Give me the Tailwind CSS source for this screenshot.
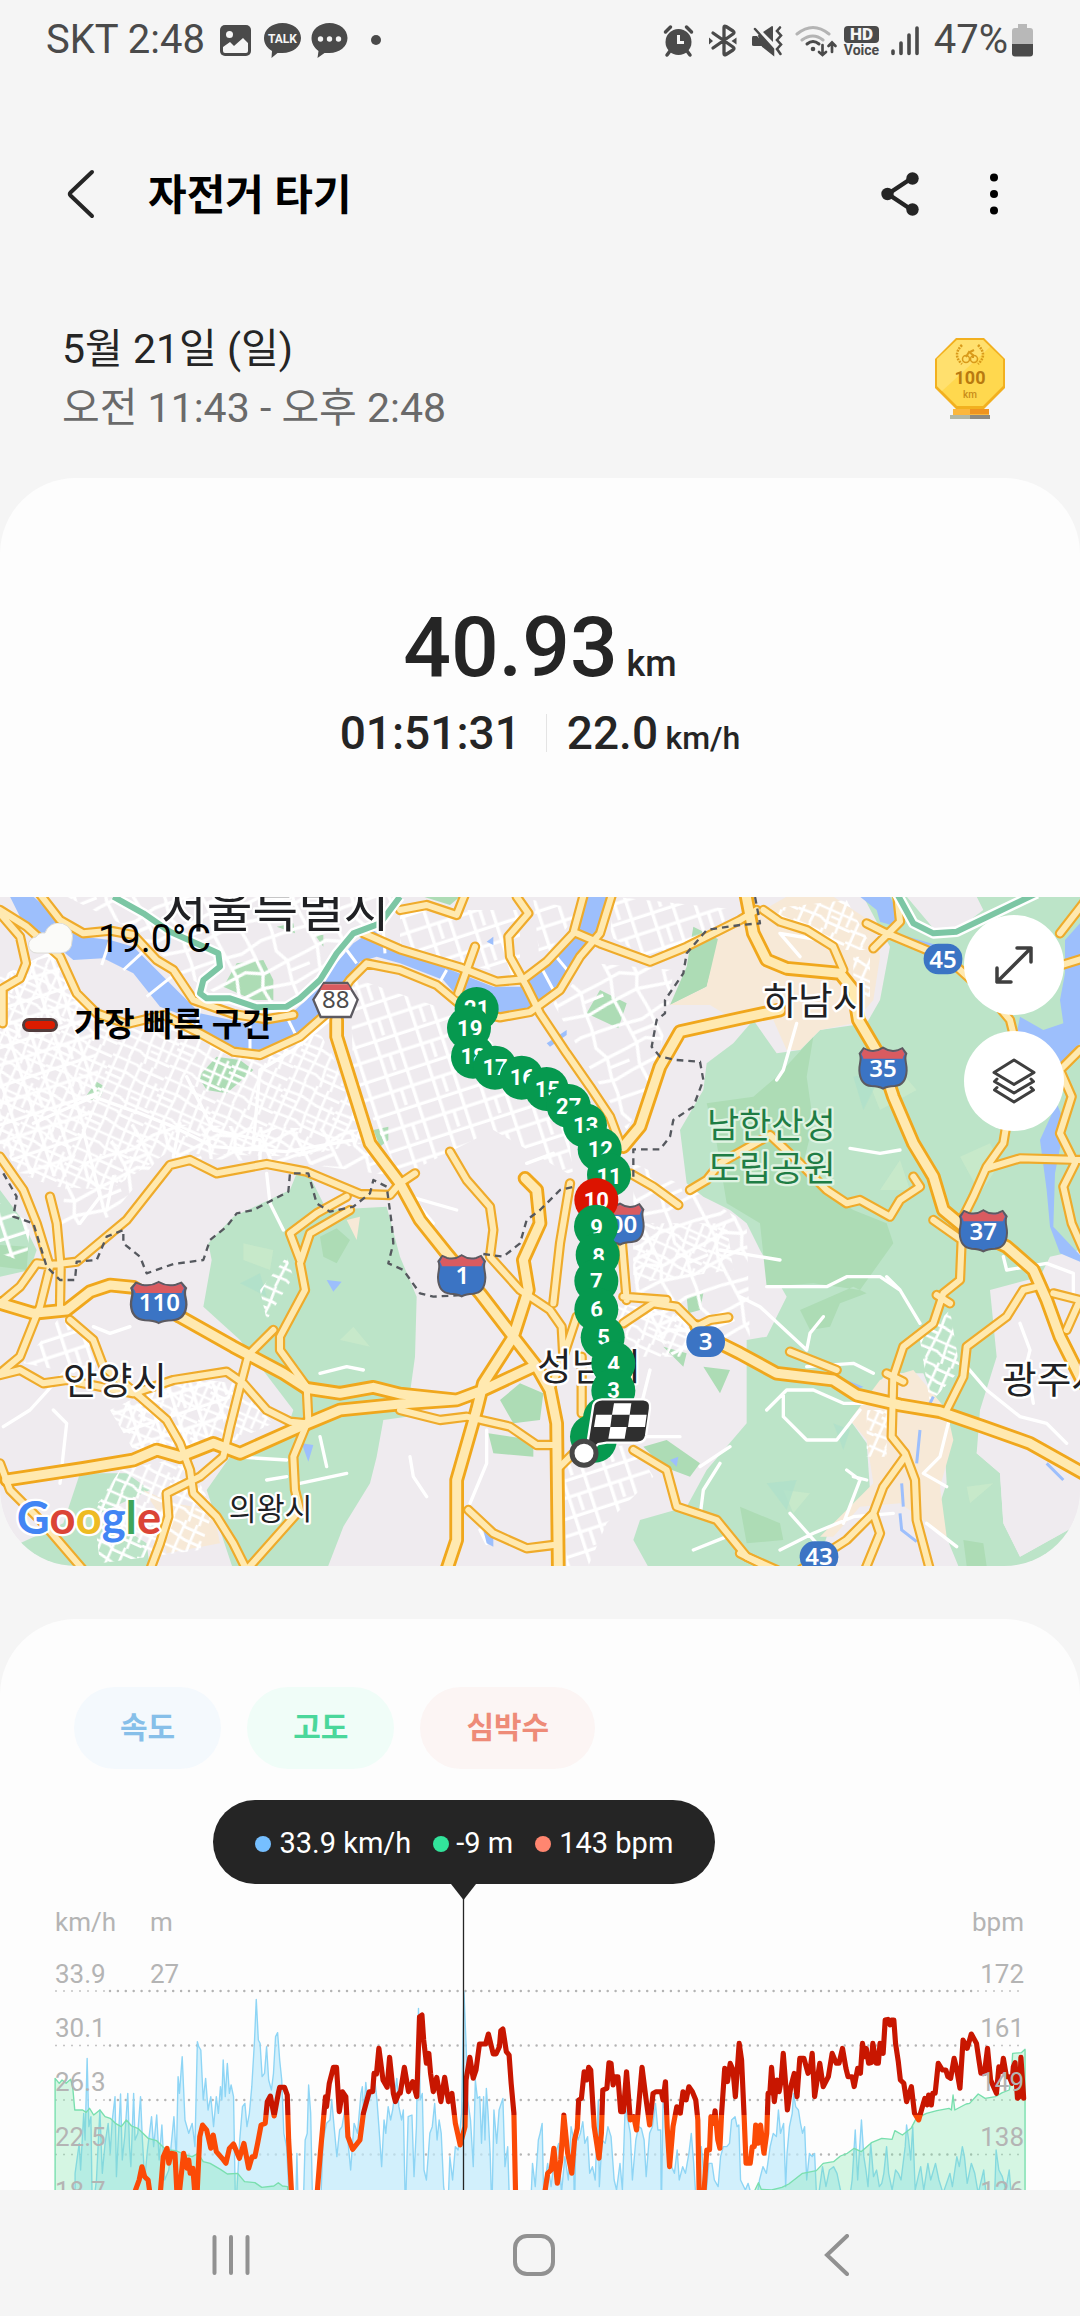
<!DOCTYPE html>
<html lang="ko">
  <head>
    <meta charset="utf-8" />
    <meta name="viewport" content="width=device-width, initial-scale=1" />
    <title>자전거 타기</title>
    <script src="https://cdn.jsdelivr.net/npm/@tailwindcss/browser@4"></script>
    <style>
      body { font-family: Roboto, "Noto Sans CJK KR", sans-serif; }
    </style>
  </head>
  <body class="bg-[#f5f5f5]">
    <div class="flex h-screen flex-col overflow-hidden bg-[#f5f5f5] text-[#252525]">
      <!-- status bar -->
      <div class="flex h-20 shrink-0 items-center justify-between px-[46px] text-[40px] leading-none text-[#4a4a4a]">
        <div class="flex items-center">
          <span class="w-[174px] whitespace-nowrap">SKT 2:48</span>
          <svg class="h-9 w-[164px]" viewBox="220 21 164 36" fill="#4a4a4a">
            <rect x="220" y="24" width="31" height="31" rx="5" />
            <circle cx="229.500" cy="33.500" r="3.500" fill="#f5f5f5" />
            <path d="M223 46l7-5 4 4 9-8 5 5v8q0 2-2 2h-21q-2 0-2-2z" fill="#f5f5f5" />
            <path d="M282.500 22c10.500 0 18.500 6.500 18.500 15s-8 15-18.500 15c-2 0-3.500 0-5 0l-6 5 .5-7c-5-3-8-7.500-8-13 0-8.500 8-15 18.500-15z" />
            <text x="282.500" y="42" font-size="12" font-weight="700" text-anchor="middle" fill="#f5f5f5">TALK</text>
            <path d="M329.500 22c10 0 18 6.500 18 15s-8 15-18 15c-2 0-3.500 0-5 0l-7 5 1-7c-4-3-7-7.500-7-13 0-8.500 8-15 18-15z" />
            <g fill="#f5f5f5"><circle cx="320.500" cy="38" r="2.700" /><circle cx="329.500" cy="38" r="2.700" /><circle cx="338.500" cy="38" r="2.700" /></g>
            <circle cx="376" cy="39" r="5" />
          </svg>
        </div>
        <div class="flex items-center">
          <svg class="h-9 w-[262px]" viewBox="660 21 262 36" fill="#4a4a4a">
            <!-- alarm -->
            <circle cx="678.500" cy="41" r="13" />
            <path d="M665.500 31l5-5M691.500 31l-5-5M670 50l-3 4M687 50l3 4" stroke="#4a4a4a" stroke-width="3.500" stroke-linecap="round" />
            <path d="M678.500 34v7.500h5.500" fill="none" stroke="#f5f5f5" stroke-width="3" />
            <!-- bluetooth -->
            <path d="M713 32l20 14q2 1.500 0 3l-7 4.500q-2 1-2-1v-26q0-2 2-1l7 4.500q2 1.500 0 3l-20 14" fill="none" stroke="#4a4a4a" stroke-width="3.300" stroke-linecap="round" stroke-linejoin="round" />
            <path d="M709 36.500v7l4-3.500zM736.500 36.500v7l-5-3.500z" />
            <!-- vibrate / mute -->
            <path d="M753 35h4l16 18q0 1-1 0l-10-8h-8q-2 0-2-1v-7q0-2 1-2zM763 31l9-6q1 0 1 1v15z" />
            <path d="M759 34l14 15v4l-10-8zM755 28l18 20" stroke="#4a4a4a" stroke-width="2.500" stroke-linecap="round" />
            <path d="M780 26.500l-3 3.500 4 4.500-4 4.500 4 4.500-4 4.500 3.500 5" fill="none" stroke="#4a4a4a" stroke-width="2.600" stroke-linecap="round" />
            <!-- wifi -->
            <g fill="none" stroke-width="3" stroke-linecap="round">
              <path d="M797 33q16-13 32 0M802 39q11-8 21 0" stroke="#b4b4b4" />
              <path d="M807 43q6-5 12 0" stroke="#4a4a4a" />
              <path d="M822.500 44v9M819 51l3.500 3 3.500-3M832 51v-9M828.500 45l3.500-3.500 3.500 3.500" stroke="#4a4a4a" stroke-width="2.700" />
            </g>
            <circle cx="813" cy="48" r="2.300" />
            <!-- hd voice -->
            <rect x="844" y="25" width="35" height="17" rx="4" />
            <text x="861.500" y="39" font-size="17" font-weight="900" text-anchor="middle" fill="#f5f5f5">HD</text>
            <text x="861.500" y="54" font-size="14" font-weight="700" text-anchor="middle">Voice</text>
            <path d="M893 50v2.500M901 42v10.500M909 34v18.500M917 27v25.500" stroke="#4a4a4a" stroke-width="3.600" stroke-linecap="round" />
          </svg>
          <span class="ml-3 whitespace-nowrap">47%</span>
          <svg class="ml-1 h-9 w-[22px]" viewBox="1012 21 22 36">
            <path d="M1018 23h9v4h3q3 0 3 3v14h-21v-14q0-3 3-3h3z" fill="#b8b8b8" />
            <path d="M1012 43h21v9.500q0 3-3 3h-15q-3 0-3-3z" fill="#4a4a4a" />
          </svg>
        </div>
      </div>

      <main class="min-h-0 flex-1 overflow-hidden">
        <header class="mt-[54px] flex h-[120px] items-center pl-[56px] pr-[66px]">
          <button aria-label="뒤로" class="flex h-16 w-[52px] items-center justify-center">
            <svg class="h-[52px] w-[32px]" viewBox="0 0 32 52" fill="none" stroke="#252525" stroke-width="4" stroke-linecap="round" stroke-linejoin="round"><path d="M26 4L4.500 24.500q-1.500 1.500 0 3L26 48" /></svg>
          </button>
          <h1 class="ml-10 flex-1 pt-1 text-[42px] font-bold leading-[60px] text-black">자전거 타기</h1>
          <button aria-label="공유" class="flex h-16 w-16 items-center justify-center">
            <svg class="h-11 w-[38px]" viewBox="0 0 38 44" fill="#252525"><path d="M31 6L7 22l24 16" fill="none" stroke="#252525" stroke-width="4.500" /><circle cx="31.500" cy="6.500" r="6.200" /><circle cx="6.500" cy="22" r="6.200" /><circle cx="31.500" cy="37.500" r="6.200" /></svg>
          </button>
          <button aria-label="더보기" class="ml-[42px] flex h-16 w-10 items-center justify-center">
            <svg class="h-11 w-3" viewBox="0 0 12 44"><circle cx="6" cy="5.500" r="4" /><circle cx="6" cy="22" r="4" /><circle cx="6" cy="38.500" r="4" /></svg>
          </button>
        </header>

        <section class="mt-[66px] flex items-center justify-between pb-10 pl-[62px] pr-[74px] text-[41px] leading-[59px]">
          <div>
            <p>5월 21일 (일)</p>
            <p class="text-[#6a6a6a]">오전 11:43 - 오후 2:48</p>
          </div>
          <svg class="h-[84px] w-[72px]" viewBox="0 0 72 84">
            <path d="M19 72h36v9H19z" fill="#fbb73d" /><path d="M36 72h19v5H36z" fill="#ef9420" />
            <path d="M16 78h40v4H16z" fill="#b3b8a5" /><path d="M36 78h20v4H36z" fill="#8e8a80" />
            <path d="M22 1h28l21 21v29L50 72H22L1 51V22z" fill="#f2b01f" />
            <path d="M23 3h26l20 19v27L49 69H23L3 49V22z" fill="#ffd84e" />
            <path d="M23 3h26l7 7L8 54l-5-5V22z" fill="#ffe06e" />
            <g fill="none" stroke="#d99a1a" stroke-width="1.500">
              <path d="M28 8q-10 10 0 19M44 8q10 10 0 19" stroke-dasharray="2 1" stroke-width="2.500" />
              <circle cx="32" cy="22" r="3.500" /><circle cx="40" cy="22" r="3.500" /><path d="M32 20l3-5 4 3v3M40 13l-4 2" stroke-width="2" />
            </g>
            <text x="36" y="47" font-size="18" font-weight="700" fill="#b97a10" text-anchor="middle">100</text>
            <text x="36" y="61" font-size="10" font-weight="500" fill="#c98d1a" text-anchor="middle">km</text>
          </svg>
        </section>

        <!-- summary + route -->
        <section class="overflow-hidden rounded-[76px] bg-[#fdfdfd]">
          <div class="pt-[120px] pb-[133px] text-center font-medium">
            <p class="text-[84px] leading-[100px]">40.93 <span class="-ml-3 text-[36px] leading-none">km</span></p>
            <div class="mt-1 flex items-center justify-center leading-[62px]">
              <span class="text-[46px]">01:51:31</span>
              <span class="ml-[25px] mr-5 h-[38px] w-px bg-[#e4e4e4]"></span>
              <p class="text-[46px]">22.0 <span class="-ml-1 text-[32px] leading-none">km/h</span></p>
            </div>
          </div>

          <div class="relative">
            <svg class="block w-full" viewBox="0 21 3240 2007" font-family="Roboto, 'Noto Sans CJK KR', sans-serif">
              <defs>
                <pattern id="dense" width="170" height="150" patternUnits="userSpaceOnUse" patternTransform="rotate(24)">
                  <path d="M0 12H80L96 20H170M0 50L60 46 110 56H170M0 90H170M0 124L70 120 90 128H170M14 0V150M50 0L54 60 48 150M90 0V90L98 150M126 0V56L132 150M155 40V120M0 70H50M100 108H132" fill="none" stroke="#fff" stroke-width="8" />
                </pattern>
                <pattern id="loose" width="260" height="210" patternUnits="userSpaceOnUse" patternTransform="rotate(-22)">
                  <path d="M0 20L80 30 150 14 260 20M0 95L70 86 120 110 200 100 260 95M30 0L40 90 24 150 30 210M110 0L118 108 100 150 110 210M190 0L180 60 200 100 190 160V210M0 160L100 150 200 170 260 160M40 60H116M200 130H260" fill="none" stroke="#fff" stroke-width="10" />
                </pattern>
                <pattern id="grid" width="130" height="110" patternUnits="userSpaceOnUse" patternTransform="rotate(-18)">
                  <path d="M0 10H130M0 60H130M20 0V110M85 0V110M50 60V110" fill="none" stroke="#fff" stroke-width="10" />
                </pattern>
                <g id="roads" fill="none" stroke-linecap="round" stroke-linejoin="round">
                  <path d="M110 0L180 90 250 130 330 122 400 135 470 210 520 240 580 330 700 372 800 388 880 374M0 60L80 110 180 200 230 310 290 370 380 402 490 375 600 430 700 485 780 495 900 440 980 370 1050 270 1100 220 1200 240 1310 285 1400 360 1500 382 1590 366 1680 300 1740 200 1800 130 1840 0M1090 130L1200 178 1380 232 1490 275 1570 268 1640 215 1720 130 1755 0M0 70L60 140 78 220 60 265 0 300M8 300V400" />
                  <path d="M1050 960L930 1030 900 1120 915 1200 840 1340 840 1380 920 1490 925 1590 880 1700 885 1800 900 1860 740 2040M1040 920L950 970 870 1030 900 1110M820 1320L745 1395 720 1490 690 1610 670 1700 600 1760 500 1810 505 1880 480 1960 450 2040M210 1290L280 1350 310 1430 420 1520 500 1590 540 1660 570 1740 580 1810 650 1880 700 1960 740 2040M0 1455L60 1440 130 1480 200 1470 400 1510 520 1470 680 1445 730 1480 800 1560 870 1595 920 1600M0 1720L30 1800 130 1900 250 2040M0 1240L60 1190 110 1120 150 1125 230 1115 380 990 510 825 570 810 650 850 800 822 920 845 1080 912 1170 915 1200 880M0 800L70 900 110 1000 150 1130 120 1250 60 1400 0 1450M150 920L170 1000 182 1130 180 1250" />
                  <path d="M1200 60L1280 45 1370 75 1400 0M1550 20L1585 70 1525 140 1530 200 1580 290 1620 370 1700 490 1770 590 1830 680 1860 760M1425 170L1375 310M1730 130L1800 160 1950 215 2060 170 2220 90 2270 60M1350 785L1400 870 1470 950 1480 1020 1470 1100 1560 1200 1650 1260 1685 1310 1690 1400M1710 880L1690 1000 1680 1060 1660 1240M1245 850L1200 880M1730 1280L1690 1400 1650 1500M1745 1400V1570M1860 990L1880 1230M1890 850L1960 890 2035 945M2070 900L2120 870 2160 820 2310 735 2400 820 2480 900 2540 940 2580 930 2670 980 2700 930 2760 890 2740 860M1320 1590L1400 1580 1530 1610 1610 1665 1660 1665M1200 1560L1320 1590M1405 1860L1480 1930 1580 1975 1660 1965M1680 1730L1720 1690M1900 1680L2000 1740 2030 1850 2150 1890 2240 2000 2330 2040M1870 1300L1960 1240 2030 1250 2090 1310M2090 1310L2130 1290 2185 1282M1870 1220L2000 1230" />
                  <path d="M2290 60L2340 95 2420 120 2500 170 2530 240M2600 100L2660 130 2780 180 2870 230 2980 330 3030 390 3045 450 3020 700 3010 760 2960 830 2920 920 2890 980M2620 175L2700 95 2690 0M3240 480L3180 540 3215 620 3180 730 3225 820 3190 890 3215 1000 3250 1080M2960 835L3060 805 3250 810M3250 40L3180 130M3170 230L3250 205M2800 990L2885 1050 2880 1170 2830 1210 2800 1300 2710 1370 2680 1460 2675 1640 2715 1690 2745 1770 2750 1890 2790 2040M2715 1700L2650 1790 2620 1870 2540 1950 2400 2040M2620 1870L2640 1930 2595 2040M2840 1560L2890 1460 2900 1370 3020 1280 3070 1200 3110 1190M2370 1385L2510 1440M3160 1210L3240 1230 3200 1320M2220 1990L2320 2040M2810 1215L2850 1240M2660 1450L2710 1475" />
                </g>
                <g id="highways" fill="none" stroke-linecap="round" stroke-linejoin="round">
                  <path d="M1010 390V440L1060 600 1110 760 1200 880 1260 990 1340 1090 1440 1210 1540 1340 1610 1430 1650 1500 1670 1600 1675 2040M0 1240L100 1270 200 1260 270 1205 330 1185 400 1192 540 1280 700 1370 850 1450 920 1495 1020 1510 1120 1492 1200 1512 1370 1530 1450 1500 1600 1430M20 1770L250 1735 400 1710 470 1680 540 1700 640 1660 720 1690 900 1610 1020 1560 1200 1542 1370 1530M1575 865L1610 900 1620 1000 1570 1110 1585 1200 1540 1340 1450 1480 1430 1560 1370 1770V1950L1340 2040" />
                  <path d="M2235 0L2260 130 2300 210 2360 235 2520 250 2560 300 2575 390 2640 500 2680 620 2740 760 2800 860 2830 960 2890 1010 3020 1070 3100 1140 3140 1230 3180 1340 3250 1480M2340 360L2220 385 2040 425 1980 530 1920 710 1870 770M2090 1310L2140 1350 2220 1390 2330 1450 2500 1470 2570 1515 2700 1545 2820 1565 2950 1610 3090 1660 3250 1750" />
                </g>
                <g id="interstate">
                  <path d="M-58-57l14 6q24 6 44-8q20 14 44 8l14-6l12 16c-8 16 2 30 1 50q-2 44-36 47q-22 0-35 8q-13-8-35-8q-34-3-36-47c-1-20 9-34 1-50z" fill="#3b74c4" stroke="#5c5a61" stroke-width="6" />
                  <path d="M-57-54l13 6q24 6 44-8q20 14 44 8l13-6l8 14q-5 8-6 14h-118q-1-6-6-14z" fill="#d95b60" />
                </g>
                <g id="pill"><rect x="-58" y="-46" width="116" height="92" rx="44" fill="#3b74c4" /></g>
              </defs>

              <rect width="3240" height="2040" fill="#efebef" />
              <!-- parks, hills -->
              <g fill="#bce4c8">
                <path d="M700 980L870 900 890 850 930 860 980 960 1160 950 1200 1100 1250 1220 1245 1400 1220 1580 1150 1590 1130 1700 1110 1780 1030 1910 980 2040H700L620 1800 690 1700 850 1650 880 1560 720 1350 610 1250 635 1110 625 1060z" />
                <path d="M240 1750L380 1750 450 1800 300 1870 440 1960 450 2040H130L60 1960 190 1900zM0 900L60 980 110 1080 90 1140 0 1160z" />
                <path d="M2620 20H3240V1080L3150 1100 3120 1160 2970 1200 2990 1400 2940 1560 2930 1690 3000 1750 3010 1900 3060 2000 3240 1900V2040H2880L2810 1870 2840 1780 2830 1600 2770 1450 2660 1450 2550 1590 2600 1660 2610 1800 2480 1940 2450 2040H1950L1900 1950 1920 1890 2060 1850 2120 1740 2240 1600V1350L2300 1340 2360 1220 2280 1080 2240 1000 2190 960 2110 920 2060 880 2040 720 2110 600 2120 520 2200 460 2260 390 2330 490 2400 480 2460 420 2600 400 2640 330 2670 170 2590 20z" />
              </g>
              <g fill="#addcb5">
                <path d="M670 290L710 220 790 210 820 270V330H760zM595 560L650 500 720 510 760 540 680 610 620 600zM245 635L290 575 315 590 300 625zM1120 720L1165 710V750L1140 770zM2080 110L2160 150 2120 290 2010 345 2060 230zM1760 370L1800 300 1880 340 1855 415zM1500 1530L1560 1480 1630 1510 1620 1590 1540 1600zM1465 1630L1600 1650V1700L1480 1690zM1930 1670L2000 1650 2100 1720 2070 1760 1990 1730zM2060 1220L2110 1210 2100 1260 2065 1270zM2110 1430L2190 1440 2160 1510zM1990 1370L2060 1390 2050 1430zM960 1040L1010 1015 1050 1050 1010 1120 970 1100zM830 110L880 100 885 130zM945 135H970V170zM1270 20H1380L1350 45z" />
                <path d="M2280 1000L2300 1190 2440 1180 2580 1200 2680 1060 2660 1000 2560 960 2470 900 2410 820 2440 700 2420 560 2440 440 2330 560 2260 620 2120 640 2150 760 2180 940zM2400 1260L2560 1190 2600 1210 2520 1240 2490 1310 2430 1320zM2220 1850L2340 1900 2350 1950 2240 1960z" />
                <path d="M0 1065L85 1070 80 1140 0 1130zM2890 1950L2950 1960 2960 2028 2900 2028z" />
              </g>
              <path d="M2880 800l90-40 30 60-60 90zM2600 560l90-30 60 70-110 60zM730 1060l90 20-10 60-80-30zM1020 1350l40-40 50 60zM2640 900l60-90 30 90zM2350 1800l80 10-50 60zM2900 1790l80-10-70 60z" fill="#c9eaca" opacity=".8" />
              <path d="M2560 560l90-20-60 120zM720 1180l60-30 20 70zM2300 1780l90-10-30 90zM2500 1600l50 20-20 60z" fill="#aedfcb" opacity=".7" />
              <path d="M2720 20H2930L2950 60 2870 120 2800 115zM3000 1750L2930 1690 2950 1580 3080 1500 3240 1440V1900L3060 2000 3010 1900z" fill="#efebef" />
              <path d="M2160 120L2290 60 2360 20H2500L2620 100 2640 200 2620 330 2560 400 2460 420 2400 480H2360L2320 390 2220 400 2130 345 2010 345 2120 290zM2640 1470L2740 1440 2840 1560 2860 1650 2820 1790 2840 1940 2700 1840 2580 1850 2500 1940H2460L2620 1780 2600 1650 2550 1590zM430 1800L520 1840 640 1860 660 1960 500 1990 470 1860zM1040 990L1080 980 1070 1050z" fill="#f7e9d7" />

              <!-- local streets -->
              <path d="M0 260L160 180 280 380 380 420 500 390 700 500 960 430 1000 500 1090 760 900 800 500 790 330 900 160 890 60 850 0 760z" fill="url(#dense)" />
              <path d="M0 260L160 180 280 380 300 620 200 860 60 850 0 760z" fill="url(#grid)" />
              <path d="M200 20H1200L1100 120 900 340 700 340 560 260 400 120zM400 700L1100 720 1200 860 900 820 480 800 330 980 180 1020 200 860z" fill="url(#loose)" />
              <path d="M1050 260L1400 380 1700 680 1720 860 1480 720 1200 860 1060 560zM1200 60H1560V260L1380 220 1200 160zM1600 30L1740 60 1620 220zM1840 20L2220 60 2050 180 1940 200 1830 140z" fill="url(#grid)" />
              <path d="M1660 340L1780 220 2020 240 2000 400 1960 560 1880 720 1760 520z" fill="url(#loose)" />
              <path d="M1900 820L2080 900 2240 1000 2250 1360 2020 1400 1900 1250z" fill="url(#loose)" />
              <path d="M1900 1000L2180 1000 2200 1140 1900 1180zM1840 1240L2060 1270 2060 1400 1900 1400z" fill="url(#dense)" />
              <path d="M1690 1700L1900 1660 1960 1760 1820 1900 1760 2040H1700z" fill="url(#grid)" />
              <path d="M330 1560L540 1460 700 1480 820 1600 640 1680 400 1680zM360 1740L560 1700 640 1860 600 1980 300 2020 280 1860z" fill="url(#dense)" />
              <path d="M330 1560L540 1460 700 1480 660 1650 400 1680zM180 1280L300 1340 280 1460 70 1420zM0 940L90 1000 80 1120 0 1090z" fill="url(#grid)" />
              <path d="M2280 60L2540 30 2620 180 2500 180zM2560 200h50v120h-50zM2760 1350L2850 1260 2880 1440 2790 1540zM2600 1560h60v140h-60zM780 1200L860 1100 880 1160 800 1290z" fill="url(#dense)" />
              <g fill="none" stroke="#fff" stroke-width="10" stroke-linejoin="round" stroke-linecap="round">
                <path d="M100 700L280 620 420 670 520 710 640 770 860 785 1060 750M250 720L300 920 240 1000M560 560L640 720 780 750V820M540 700L520 800M340 860L320 960M1000 380L880 480 780 540 760 760M800 850L810 940 850 1020M2300 1190L2480 1190 2540 1160 2640 1160 2700 1200 2760 1300M2340 1110L2160 1080M2220 1220L2280 1250 2420 1380 2430 1330 2470 1280M2300 1560L2360 1500 2440 1500 2530 1540 2620 1540M2350 1510V1580L2420 1650H2510L2580 1560M2340 1980L2440 1930 2560 1880 2680 1870M2560 1760L2600 1770M2530 1900L2580 1770 2540 1740M2370 1870L2450 1960M2850 1580L2820 1700 2770 1750 2840 1790M2780 1900L2870 1970M2900 1430L2960 1500 3060 1580 3140 1600 3200 1660M3010 1100L3020 1140 3140 1120 3220 1150V1210M3060 1300L3090 1380 3080 1420 3100 1540M2390 400L2350 540 2330 570M2550 775L2640 790 2700 780M2400 200L2340 130 2460 150M700 1700L860 1710M800 1770L860 1760M960 1450L1040 1430 1090 1440M960 1640L980 1730M900 1780L1040 1750M280 1310L330 1330 390 1310M10 1610L90 1560 190 1450M160 1560L200 1600 180 1780M1230 1700L1240 1760 1280 1820M1460 1620V1720L1410 1840M1440 1920L1460 1960M1950 1440L1900 1640 2040 1640M2160 1720L2110 1800 2100 1880M2080 1980L2180 1940M2100 1730L2190 1670M2420 1430L2560 1420 2620 1450M2700 1200L2660 1160M1200 880L1300 1000M1230 920L1370 960M1580 820L1660 790" />
              </g>

              <!-- water -->
              <path d="M30 20H100L180 90 250 140 330 150 400 170 470 240 530 300 600 370 740 400 850 390 920 330 1000 230 1060 160 1120 120 1200 185 1340 235 1480 290 1560 290 1640 225 1720 140 1750 20H1830L1800 120 1750 180 1700 280 1620 350 1500 375 1390 340 1330 270 1200 220 1130 200 1080 215 1020 300 960 390 880 440 780 480 700 470 610 430 560 380 480 350 400 250 310 205 220 210 100 110 60 80z" fill="#9dbffc" />
              <path d="M330 150L305 225M430 185L370 240M515 260L440 320M600 350L590 410M750 400V480M860 380L885 430M1040 180L1070 220M1150 120L1155 190M1340 240L1320 275M1625 235L1660 300M1660 190L1710 250" stroke="#fff" stroke-width="9" />
              <path d="M3240 100L3195 150V250L3180 330 3190 400 3130 420 3060 380 3050 430 3150 470 3190 540 3240 460zM3170 640L3120 750 3140 900 3150 1010 3180 1090 3240 1115V1095L3160 1010 3165 850 3195 700zM2580 20L2630 60 2640 95 2690 110V60L2670 20zM2690 130L2860 180 2780 165zM2540 1470L2590 1490 2570 1500zM980 1170L1025 1175 1000 1205zM905 1660L940 1665 925 1715zM1450 1920L1480 1940V1970L1460 1960zM2010 1710L2035 1700 2030 1730zM1480 140V165L1460 155zM1640 460L1700 420 1700 435 1650 470z" fill="#9dbffc" />
              <path d="M2760 1620L2750 1720M2705 1780L2710 1850M2700 1870L2705 1920 2750 1955M2800 1520L2780 1560M3140 1720L3190 1770" fill="none" stroke="#9dbffc" stroke-width="9" />

              <!-- road casings, then fills -->
              <use href="#roads" stroke="#efab2b" stroke-width="31" />
              <use href="#highways" stroke="#f0a71c" stroke-width="44" />
              <use href="#roads" stroke="#ffe9b0" stroke-width="18" />
              <use href="#highways" stroke="#ffe9b0" stroke-width="27" />
              <g fill="none" stroke-linejoin="round">
                <path d="M340 20L430 70 510 125 600 165 655 190 660 230 610 270 600 310 620 325 690 325 770 352 860 350 900 325 960 270 1010 190 1060 130 1140 100 1200 20M2685 0L2740 100 2800 130 2870 125 3110 10" stroke="#fff" stroke-width="32" />
                <path d="M340 20L430 70 510 125 600 165 655 190 660 230 610 270 600 310 620 325 690 325 770 352 860 350 900 325 960 270 1010 190 1060 130 1140 100 1200 20M2685 0L2740 100 2800 130 2870 125 3110 10" stroke="#7cc6a4" stroke-width="18" />
                <path d="M10 850L50 920 40 980 100 1000 140 1130 180 1170H225L230 1115 290 1110 320 1040 370 1020V1060L420 1100 440 1150 520 1122 610 1110 630 1050 680 1010 710 970 760 960 865 905 870 850H925L950 940 990 965 1060 950 1110 910 1120 870 1160 890 1175 1000 1180 1060 1165 1120 1210 1140 1260 1210 1300 1220 1390 1215M1450 1092L1510 1100 1560 1060 1580 990 1620 960 1680 900 1730 888M1900 860V778H1980L2010 740 2020 690 2080 650 2110 570 2100 515 2030 510 1980 500 1955 470 1970 390 1995 370V330L2050 250 2060 190 2120 120 2220 105 2280 100 2265 20" stroke="#55585e" stroke-width="7" stroke-dasharray="20 15" />
              </g>

              <!-- route shields -->
              <g font-family="'Noto Sans', sans-serif" font-weight="600" fill="#fff" text-anchor="middle" font-size="72">
                <path d="M972 279H1042L1073 329 1052 381H962L940 329z" fill="#fff" stroke="#5c5a61" stroke-width="7" />
                <path d="M970 283H1044L1054 300H960z" fill="#d95b60" />
                <text x="1007" y="355" fill="#4c4c4c" font-weight="400">88</text>
                <use href="#interstate" x="2649" y="532" /><text x="2649" y="560">35</text>
                <use href="#interstate" x="2950" y="1020" /><text x="2950" y="1050">37</text>
                <use href="#interstate" transform="translate(476 1235) scale(1.17 1)" /><text x="478" y="1264">110</text>
                <use href="#interstate" x="1385" y="1155" /><text x="1387" y="1182">1</text>
                <use href="#interstate" x="1860" y="1000" /><text x="1850" y="1028">100</text>
                <use href="#pill" x="2829" y="207" /><text x="2829" y="233">45</text>
                <use href="#pill" x="2117" y="1355" /><text x="2117" y="1381">3</text>
                <use href="#pill" x="2457" y="2000" /><text x="2457" y="2025">43</text>
              </g>

              <!-- place names -->
              <g fill="#202124" stroke="#fff" stroke-width="14" stroke-linejoin="round" paint-order="stroke" text-anchor="middle">
                <text x="826" y="112" font-size="149">서울특별시</text>
                <text x="2446" y="373" font-size="113">하남시</text>
                <text x="345" y="1512" font-size="113">안양시</text>
                <text x="812" y="1889" font-size="91">의왕시</text>
                <text x="1767" y="1470" font-size="113">성남시</text>
                <text x="3162" y="1510" font-size="113">광주시</text>
                <g fill="#1f7d45" stroke="#dff3e2" font-size="105"><text x="2314" y="745">남한산성</text><text x="2314" y="874">도립공원</text></g>
              </g>
              <text x="50" y="1933" font-family="Lato, sans-serif" font-size="136" font-weight="700" stroke="#fff" stroke-width="14" stroke-linejoin="round" paint-order="stroke"><tspan fill="#4285f4">G</tspan><tspan fill="#db4437">o</tspan><tspan fill="#eebb22">o</tspan><tspan fill="#4285f4">g</tspan><tspan fill="#3fa55a">l</tspan><tspan fill="#db4437">e</tspan></text>

              <!-- kilometre markers -->
              <g fill="#06994f" font-size="66" font-weight="700" text-anchor="middle">
                <circle cx="1430" cy="357" r="66" /><text x="1430" y="378" fill="#fff">21</text>
                <circle cx="1407" cy="414" r="66" /><text x="1409" y="437" fill="#fff">19</text>
                <circle cx="1419" cy="500" r="66" /><text x="1419" y="523" fill="#fff">18</text>
                <circle cx="1485" cy="533" r="66" /><text x="1485" y="556" fill="#fff">17</text>
                <circle cx="1565" cy="563" r="66" /><text x="1567" y="586" fill="#fff">16</text>
                <circle cx="1640" cy="597" r="66" /><text x="1642" y="620" fill="#fff">15</text>
                <circle cx="1706" cy="648" r="66" /><text x="1706" y="672" fill="#fff">27</text>
                <circle cx="1755" cy="706" r="66" /><text x="1757" y="729" fill="#fff">13</text>
                <circle cx="1799" cy="778" r="66" /><text x="1801" y="801" fill="#fff">12</text>
                <circle cx="1827" cy="855" r="66" /><text x="1827" y="881" fill="#fff">11</text>
                <circle cx="1789" cy="930" r="66" fill="#dc1400" /><text x="1789" y="953" fill="#fff">10</text>
                <circle cx="1788" cy="1010" r="66" /><text x="1790" y="1035" fill="#fff">9</text>
                <circle cx="1793" cy="1095" r="66" /><text x="1796" y="1121" fill="#fff">8</text>
                <circle cx="1789" cy="1173" r="66" /><text x="1789" y="1197" fill="#fff">7</text>
                <circle cx="1789" cy="1258" r="66" /><text x="1790" y="1281" fill="#fff">6</text>
                <circle cx="1808" cy="1342" r="66" /><text x="1811" y="1365" fill="#fff">5</text>
                <circle cx="1840" cy="1420" r="66" /><text x="1841" y="1445" fill="#fff">4</text>
                <circle cx="1840" cy="1502" r="66" /><text x="1841" y="1525" fill="#fff">3</text>
                <circle cx="1815" cy="1585" r="66" /><circle cx="1776" cy="1640" r="66" /><circle cx="1784" cy="1652" r="66" />
              </g>
              <path d="M1806 1528H1930Q1954 1530 1950 1556L1938 1638Q1934 1658 1912 1658H1820L1795 1662 1756 1700 1780 1545Q1784 1530 1806 1528z" fill="#2f2f2f" stroke="#fff" stroke-width="7" />
              <path d="M1842 1540H1894L1889 1574H1836zM1788 1574H1836L1831 1611H1782zM1889 1574H1940L1935 1611H1884zM1831 1611H1880L1874 1646H1825z" fill="#fff" />
              <circle cx="1752" cy="1690" r="36" fill="#fff" stroke="#474747" stroke-width="15" />
            </svg>

            <div class="absolute left-[22px] top-5 flex flex-col gap-[42px] text-black">
              <div class="flex items-center text-[38px] leading-[44px]">
                <svg class="h-[32px] w-[56px]" viewBox="22 923 56 32"><path d="M37 953a8 8 0 0 1-1-16 9 9 0 0 1 9-4 14 14 0 0 1 27 8q0 11-11 12z" fill="#fbfbf9" stroke="#dddcd8" /></svg>
                <span class="ml-5">19.0°C</span>
              </div>
              <div class="flex items-center text-[33px] font-bold leading-[44px]">
                <span class="h-[14px] w-[36px] rounded-full border-3 border-[#513c3c] bg-[#dc1c00]"></span>
                <span class="ml-4">가장 빠른 구간</span>
              </div>
            </div>
            <div class="absolute right-4 top-[18px] flex flex-col gap-4">
              <button aria-label="지도 확대" class="flex size-[100px] items-center justify-center rounded-full bg-white">
                <svg class="size-10" viewBox="0 0 40 40" fill="none" stroke="#3f3f3f" stroke-width="3.500" stroke-linecap="round" stroke-linejoin="round"><path d="M3 37L37 3M23 3h14v14M3 23v14h14" /></svg>
              </button>
              <button aria-label="지도 유형" class="flex size-[100px] items-center justify-center rounded-full bg-white">
                <svg class="h-[46px] w-[46px]" viewBox="0 0 46 46" fill="none" stroke="#3f3f3f" stroke-width="3" stroke-linecap="round" stroke-linejoin="round"><path d="M23 2L43 14.500 23 26.500 3 14.500zM6 21l-2.500 2.500L23 35l19.500-11.500L40 21M6 29.500L3.500 32 23 44l19.500-12-2.500-2.500" /></svg>
              </button>
            </div>
          </div>
        </section>

        <!-- chart -->
        <section class="mt-[53px] rounded-t-[76px] bg-[#fdfdfd] pt-[68px]">
          <div class="flex gap-[26px] pl-[74px] text-[30px] font-bold leading-[82px]">
            <button class="rounded-full bg-[#f4f9fd] px-[46px] text-[#86bfe9]">속도</button>
            <button class="rounded-full bg-[#f0fdf8] px-[46px] text-[#4ad79b]">고도</button>
            <button class="rounded-full bg-[#fcf5f4] px-[46px] text-[#ee8b78]">심박수</button>
          </div>
          <div class="relative pt-[115px]">
            <div class="absolute left-[43%] top-[31px] flex h-[84px] w-[502px] -translate-x-1/2 items-center justify-center gap-[22px] whitespace-nowrap rounded-full bg-[#252525] pt-1 text-[29px] text-white">
              <span class="flex items-center gap-[8px]"><i class="size-4 rounded-full bg-[#76bfff]"></i>33.9 km/h</span>
              <span class="flex items-center gap-[7px]"><i class="size-4 rounded-full bg-[#32e39b]"></i>-9 m</span>
              <span class="flex items-center gap-[8px]"><i class="size-4 rounded-full bg-[#ff8670]"></i>143 bpm</span>
            </div>
            <svg class="block w-full" viewBox="0 0 1080 370">
              <defs>
                <linearGradient id="zone" gradientUnits="userSpaceOnUse" x1="0" y1="0" x2="0" y2="1000">
                  <stop offset=".705" stop-color="#c81600" /><stop offset=".705" stop-color="#fb4a06" />
                </linearGradient>
              </defs>
              <g stroke="#b4b4b4" stroke-width="2.500" stroke-dasharray="0 7.900" stroke-linecap="round"><path d="M110 107H975M110 161.500H975M110 216H975M110 270.500H975M110 325H975" /></g>
              <g stroke="#c4c4c4" stroke-width="1.300" stroke-dasharray="2 6"><path d="M55 107H108M55 161.500H108M55 216H108M55 270.500H108M977 107H1025M977 161.500H1025M977 216H1025M977 270.500H1025" /></g>
              <g transform="translate(0 -4) scale(.34444 .33333)" stroke-linejoin="round">
                <g fill="#bfeafb" fill-opacity=".7" stroke="#8ed5f5" stroke-width="4">
                  <path d="M218 1130V880L230 790 234 870 243 700 247 780 253 535 258 740 264 710 268 1000 280 900 290 690 297 880 305 790 314 730 320 820 326 720 334 650 338 890 350 642 355 840 362 770 371 640 376 800 380 860 388 640 392 780 400 760 408 650 413 770 420 900 428 810 440 710 446 800 455 705 462 840 470 735 478 900 490 870 505 710 512 840 517 590 521 640 529 530 537 720 548 760 558 730 566 800 573 485 577 500 583 510 590 660 597 595 604 690 612 650 620 740 628 650 634 700 640 620 644 660 648 540 654 650 660 550 666 640 671 615 678 650 684 1000 696 780 704 680 711 670 717 740 724 700 731 620 739 480 744 358 750 480 755 490 761 590 768 580 774 500 780 600 788 630 794 580 800 470 806 458 812 540 818 600 824 760 832 800 842 1000H858L862 820 866 1000H880L886 780 892 760 896 615 902 700 908 1000H930L938 780 948 730 958 720 963 660 970 740 978 830 986 750 993 740 1001 690 1008 760 1018 870 1028 730 1038 760 1048 640 1052 620 1056 700 1062 607 1068 670 1078 640 1087 590 1094 655 1100 740 1108 860 1115 720 1120 760 1127 680 1134 720 1140 690 1146 640 1152 595 1158 680 1166 720 1171 690 1177 1000 1185 710 1196 705 1202 890 1209 740 1215 385 1220 660 1226 640 1231 870 1238 900 1248 760 1255 740 1262 670 1269 780 1275 720 1281 760 1288 920 1300 1000 1306 830 1314 900 1322 800 1330 810 1340 700 1347 335 1353 490 1358 660 1366 720 1374 860 1380 600 1386 655 1393 650 1398 790 1404 650 1408 780 1412 625 1417 700 1423 820 1428 1000 1434 690 1442 790 1449 690 1460 655 1466 860 1474 800 1480 1000H1540L1546 850 1554 920 1563 780 1568 760 1574 730 1578 930 1590 850 1600 920 1610 830 1622 790 1630 940 1640 830 1650 900 1658 740 1664 770 1668 1000 1672 750 1678 780 1685 760 1692 725 1698 790 1706 770 1712 880 1720 860 1728 900 1737 660 1740 920 1748 780 1757 790 1765 740 1774 770 1783 900 1790 930 1800 850 1807 930 1815 680 1823 720 1830 760 1836 900 1846 780 1854 740 1862 745 1870 780 1876 890 1886 760 1894 740 1903 670 1910 750 1918 750 1920 1000 1925 660 1932 700 1940 780 1950 860 1958 880 1966 810 1972 900 1982 860 1990 880 2000 820 2007 760 2014 850 2022 980 2036 800 2044 890 2050 940 2058 850 2067 850 2074 900 2085 920 2092 830 2100 800 2110 800 2118 790 2124 720 2134 710 2140 740 2145 735 2150 900 2164 930 2172 910 2180 940 2190 1000 2205 900 2215 860 2225 880 2236 800 2245 760 2254 770 2260 690 2266 760 2275 730 2281 920 2285 820 2292 740 2300 700 2304 640 2310 680 2318 690 2324 730 2330 760 2336 740 2342 900 2350 820 2358 830 2365 820 2372 980 2388 860 2398 920 2408 870 2420 860 2430 880 2440 930 2466 960 2474 900 2483 750 2490 900 2496 800 2501 720 2508 830 2514 870 2520 920 2528 790 2536 890 2545 870 2553 920 2560 910 2566 880 2574 800 2580 880 2590 930 2600 870 2608 880 2616 900 2628 800 2632 735 2638 780 2644 840 2650 740 2657 930 2668 880 2673 860 2682 930 2694 850 2702 900 2716 850 2726 900 2738 940 2758 880 2765 920 2778 830 2785 860 2794 800 2800 830 2808 910 2820 850 2830 880 2840 940 2856 870 2868 1000H2886L2892 810 2900 870 2910 890 2920 930 2930 870 2940 1000V1130z" />
                </g>
                <path d="M160 1130V595L172 610 180 600 192 610 205 598 211 620 217 690H240L250 697 260 685 272 705 290 690 305 710 320 715 335 730 352 740 367 720 382 738 400 745 430 775 455 782 480 808 510 812 540 825 558 830 575 820 590 845 610 850 640 868 660 882 690 880 710 905 740 908 760 922 795 918 808 908 820 918 835 920 845 1130zM2185 1130L2192 930 2202 908 2210 928 2240 930 2270 922 2290 912 2330 880 2370 872 2390 850 2420 845 2440 828 2460 820 2480 805 2500 815 2530 788 2560 775 2590 778 2598 752 2620 765 2645 745 2660 715 2690 700 2720 692 2755 685 2762 690 2767 645 2772 690 2805 672 2815 670 2840 642 2860 655 2890 650 2910 638 2930 630 2936 590 2940 520 2965 518 2976 508V1130z" fill="#6fe6a0" fill-opacity=".28" stroke="#79dfae" stroke-width="4" />
                <g fill="none" stroke="url(#zone)" stroke-width="15" stroke-linecap="round">
                  <path d="M390 940L404 900 412 860 420 890 430 900 436 945M465 945L474 830 485 805 490 850 497 820 508 822 514 945M520 945L533 820 543 865 548 840 552 880 560 865 566 945M572 945L580 770 588 735 600 750 612 805 619 765 628 815 645 835 656 850 666 805 678 792 695 835 708 790 722 865 732 830 740 830 748 790 758 735 770 730 776 665 785 648 796 708 808 640 812 622 826 622 834 645 838 780 847 950M920 950L930 820 945 650 948 680 956 610 968 562 977 562 985 695 994 635 1004 650 1010 770 1024 808 1045 780 1055 700 1072 635 1082 635 1086 580 1093 582 1100 505 1112 600 1124 622 1131 532 1142 640 1148 665 1158 640 1162 640 1174 562 1186 635 1198 605 1210 650 1218 410 1225 405 1230 480 1238 550 1245 520 1250 580 1258 635 1268 592 1280 665 1291 592 1302 665 1312 640 1322 730 1336 795 1350 740 1353 600 1364 532 1374 595 1382 570 1392 492 1410 492 1418 462 1432 522 1440 522 1450 500 1454 452 1460 447 1470 515 1478 525 1484 610 1492 700 1497 950" />
                  <path d="M1580 950L1590 880 1600 870 1608 805 1618 910 1628 840 1637 705 1648 820 1660 880 1668 780 1676 745 1680 660 1688 655 1696 575 1703 600 1709 562 1715 570 1725 740 1739 835 1746 760 1750 630 1762 625 1768 548 1774 550 1780 615 1787 590 1794 590 1802 695 1810 695 1819 575 1830 720 1840 710 1848 750 1864 562 1876 660 1886 735 1896 640 1905 635 1920 635 1925 660 1932 605 1937 740 1944 860 1954 740 1965 680 1975 700 1983 635 1992 660 2000 620 2010 635 2020 660 2026 720 2030 950M2043 950L2052 810 2060 810 2064 710 2072 730 2076 692 2084 780 2090 805 2095 700 2104 565 2112 605 2120 550 2128 570 2135 650 2146 490 2153 540 2160 700 2166 850 2178 850 2184 800 2190 800 2194 735 2201 790 2208 735 2218 820 2226 760 2230 640 2235 640 2240 562 2248 665 2256 600 2262 635 2268 600 2274 520 2280 600 2286 690 2296 620 2306 580 2314 650 2322 535 2334 535 2346 580 2352 570 2358 520 2365 650 2380 550 2390 620 2405 590 2416 520 2428 550 2436 550 2446 505 2456 565 2462 590 2474 590 2480 620 2490 565 2498 580 2504 490 2510 530 2515 505 2522 550 2530 548 2534 490 2544 550 2550 550 2555 490 2564 520 2570 420 2578 418 2584 435 2588 420 2595 420 2600 490 2608 545 2614 600 2624 610 2632 665 2646 620 2655 700 2667 720 2685 655 2692 675 2696 645 2704 675 2708 640 2715 640 2724 550 2736 570 2746 570 2752 590 2760 595 2770 535 2776 560 2787 625 2796 480 2808 505 2820 462 2835 490 2842 540 2848 580 2858 580 2867 505 2876 600 2893 640 2900 560 2908 575 2913 535 2922 590 2930 590 2938 610 2942 560 2947 548 2954 655 2960 650 2964 532 2972 655" />
                </g>
              </g>
              <path d="M463.500 14V370" stroke="#252525" stroke-width="1.300" />
              <path d="M451 0H476L463.500 16z" fill="#252525" />
              <g font-size="26" fill="#b4b4b4">
                <text x="55" y="47">km/h</text><text x="150" y="47">m</text>
                <text x="55" y="99">33.9</text><text x="150" y="99">27</text>
                <text x="55" y="153">30.1</text><text x="55" y="207">26.3</text><text x="55" y="262">22.5</text><text x="55" y="316">18.7</text>
                <g text-anchor="end"><text x="1024" y="47">bpm</text><text x="1024" y="99">172</text><text x="1024" y="153">161</text><text x="1024" y="207">149</text><text x="1024" y="262">138</text><text x="1024" y="316">126</text></g>
              </g>
            </svg>
          </div>
        </section>
      </main>

      <nav class="grid h-[126px] shrink-0 grid-cols-3 items-center bg-[#f5f5f5] pl-20 pr-[92px] pt-1 text-[#919191]">
        <button aria-label="최근 앱" class="flex justify-center"><svg class="h-[42px] w-[40px]" viewBox="0 0 40 42" stroke="currentColor" stroke-width="4" stroke-linecap="round"><path d="M3.500 3v36M20 3v36M36.500 3v36" /></svg></button>
        <button aria-label="홈" class="flex justify-center"><svg class="size-[42px]" viewBox="0 0 42 42" fill="none" stroke="currentColor" stroke-width="4"><rect x="2" y="2" width="38" height="38" rx="12" /></svg></button>
        <button aria-label="뒤로" class="flex justify-center"><svg class="h-[42px] w-[26px]" viewBox="0 0 26 42" fill="none" stroke="currentColor" stroke-width="4" stroke-linecap="round"><path d="M23 2L3 21l20 19" /></svg></button>
      </nav>
    </div>
  </body>
</html>
